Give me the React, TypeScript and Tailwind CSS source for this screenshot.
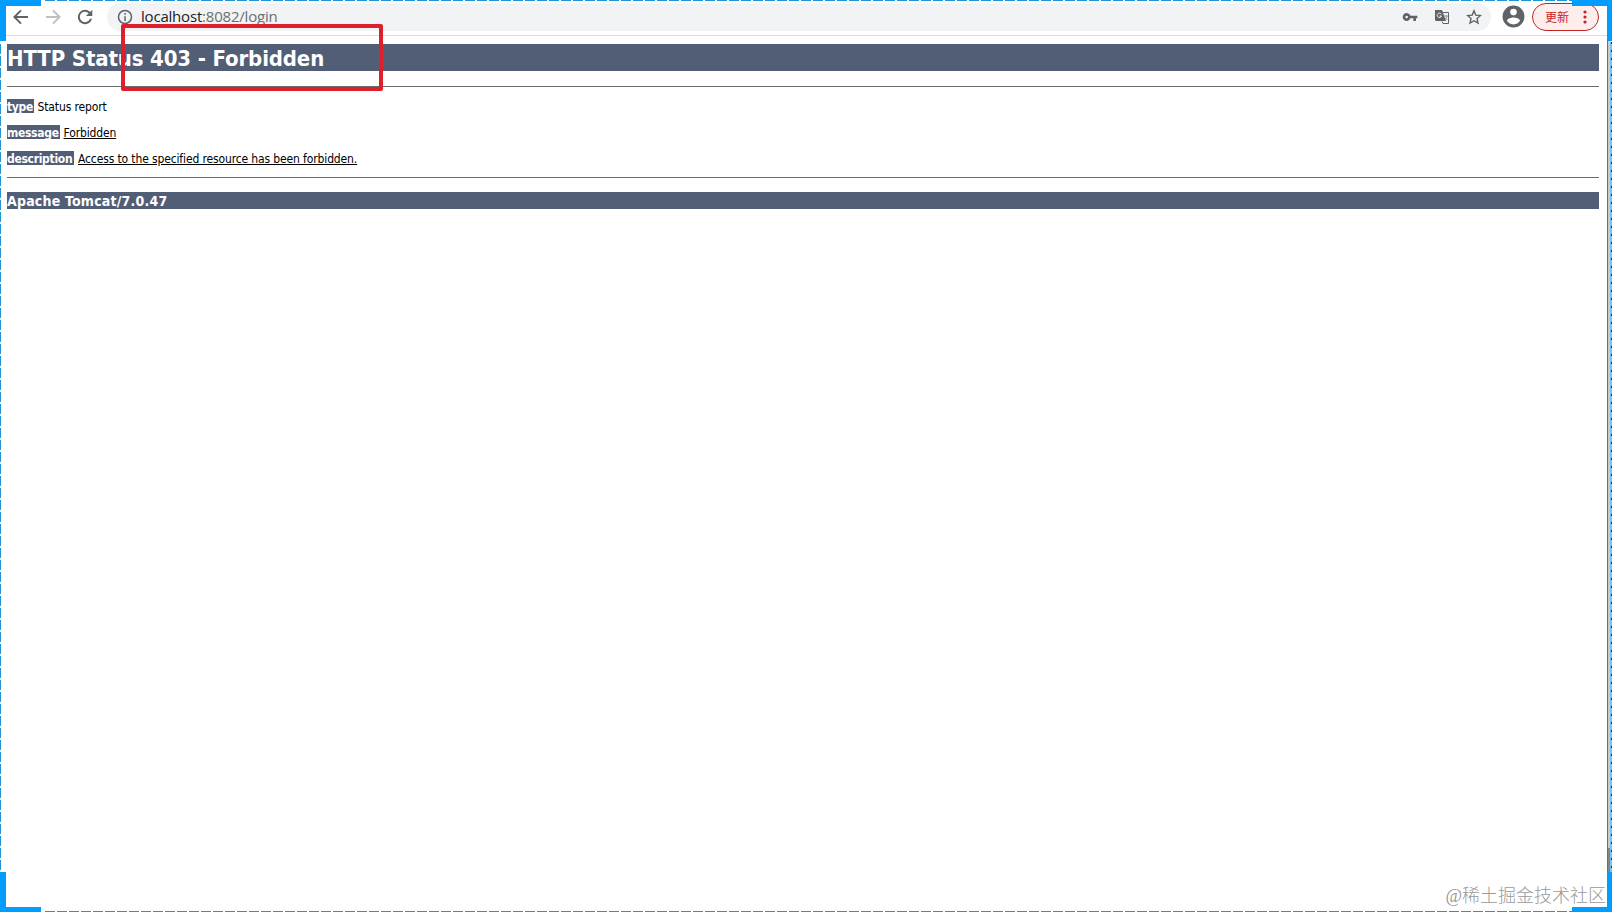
import type { ReactNode } from "react";

const BAND = "bg-[#525d76] text-white font-bold";

function Label({ children, width }: { children: ReactNode; width: string }) {
  return (
    <b className={`inline-block h-[14px] leading-[17px] tracking-[-0.3px] whitespace-nowrap ${BAND} ${width}`}>
      {children}
    </b>
  );
}

function Toolbar() {
  return (
    <header className="flex h-[36px] items-center border-b border-[#dadce0] pb-[2px] pl-[9px] pr-[13px] font-['Open_Sans',sans-serif]">
      <svg className="size-6" viewBox="0 0 24 24" fill="#5f6368">
        <path d="M19 11H7.8l4.9-4.9-1.4-1.4L4 12l7.3 7.3 1.4-1.4L7.8 13H19z" />
      </svg>
      <svg className="ml-2 size-6" viewBox="0 0 24 24" fill="#bdc1c6">
        <path d="M5 13h11.2l-4.9 4.9 1.4 1.4L20 12l-7.3-7.3-1.4 1.4 4.9 4.9H5z" />
      </svg>
      <svg className="ml-2 size-6" viewBox="0 0 24 24" fill="#5f6368">
        <path d="M17.1 6.9A7.2 7.2 0 1 0 19 13.8h-2.1A5.2 5.2 0 1 1 15.7 8.3L13 11h6.3V4.7z" />
      </svg>
      <div className="ml-[10px] flex h-7 flex-1 items-center rounded-full bg-[#f1f3f4] pl-[10px] pr-[9px] text-[15px]">
        <svg className="size-4" viewBox="0 0 16 16" fill="none" stroke="#5f6368" strokeWidth="1.5">
          <circle cx="8" cy="8" r="6.5" />
          <path d="M8 7.2V12M8 4v1.7" />
        </svg>
        <span className="ml-2 tracking-[-0.2px] text-[#202124]">
          localhost<span className="text-[#6b6f73]">:8082/login</span>
        </span>
        <svg className="ml-auto size-4" viewBox="0 0 24 24" fill="#5f6368">
          <path d="M12.65 10A6 6 0 1 0 12.65 14H17v4h4v-4h2v-4H12.65zM7 14a2 2 0 1 1 0-4 2 2 0 0 1 0 4z" />
        </svg>
        <svg className="ml-4 size-4" viewBox="0 0 16 16">
          <path d="M1 1h7l4 11H2.500A1.500 1.500 0 0 1 1 10.500z" fill="#5f6368" />
          <path d="M8.500 3.500H14.500V14.500H9L8 12.500" fill="none" stroke="#5f6368" />
          <path d="M7.300 5.200A2.200 2.200 0 1 0 7.500 7H5.500" fill="none" stroke="#f1f3f4" />
          <path d="M10 7h4M12 6v1M13.200 7q-.7 2.500-2.400 4M11 8.500l2.500 2.500" fill="none" stroke="#80868b" strokeWidth=".8" />
        </svg>
        <svg className="ml-4 size-4" viewBox="0 0 16 16" fill="none" stroke="#5f6368" strokeWidth="1.4">
          <path d="M8 1.800l1.800 4.300 4.700.4-3.500 3.100 1 4.500L8 11.700l-4 2.400 1-4.500-3.500-3.100 4.700-.4z" />
        </svg>
      </div>
      <svg className="ml-[11px] size-[23px]" viewBox="1.500 1.500 21 21" fill="#5f6368">
        <path d="M12 2a10 10 0 1 0 0 20 10 10 0 0 0 0-20zm0 3a3 3 0 1 1 0 6 3 3 0 0 1 0-6zm0 14.200a7.200 7.200 0 0 1-6-3.220c.03-1.990 4-3.080 6-3.080s5.970 1.090 6 3.080a7.200 7.200 0 0 1-6 3.220z" />
      </svg>
      <div className="ml-[7px] flex h-7 w-[67px] items-center rounded-full border border-[#c5221f] bg-[#fdeeed] pl-3 pr-[11px] text-[#c5221f]">
        <span className="font-['Noto_Sans_CJK_SC',sans-serif] text-[12px]">更新</span>
        <svg className="ml-auto h-4 w-1" viewBox="0 0 4 16" fill="#c5221f">
          <circle cx="2" cy="3" r="1.600" />
          <circle cx="2" cy="8" r="1.600" />
          <circle cx="2" cy="13" r="1.600" />
        </svg>
      </div>
    </header>
  );
}

function SelectionFrame() {
  return (
    <svg className="pointer-events-none absolute inset-0" width="1612" height="912" fill="none">
      <path d="M1609.500 0V912" stroke="#c9c9c9" strokeWidth="3" />
      <path d="M1609.500 848V872" stroke="#858585" strokeWidth="3" />
      <path d="M1607.500 0V872" stroke="#6e6e6e" />
      <path d="M1611 42V872" stroke="#6fc3ee" strokeWidth="2" />
      <path d="M1611.500 42V872" stroke="#12344d" strokeDasharray="2 6" />
      <path d="M45 .5H1572M45 911.500H1572M.5 44V872" stroke="#2196d6" strokeDasharray="10 2" />
      <path
        d="M0 0H41V6H6V41H0zM1572 0H1612V41H1607V6H1572zM0 872H6V907H41V912H0zM1607 872H1612V912H1572V907H1607z"
        fill="#009dff"
      />
    </svg>
  );
}

export default function App() {
  return (
    <div className="relative h-[912px] w-[1612px] overflow-hidden bg-white text-black">
      <Toolbar />
      <main className="flex flex-col pl-[7px] pr-[13px] pt-2 font-['DejaVu_Sans_Condensed','DejaVu_Sans',sans-serif] text-[12px]">
        <h1 className={`h-[27px] text-[22px] leading-[29px] tracking-[-0.14px] ${BAND}`}>HTTP Status 403 - Forbidden</h1>
        <hr className="mt-[15px] border-[#6c6c6c]" />
        <p className="mt-3 flex h-[14px] gap-[3.500px] leading-[17px]">
          <Label width="w-[27px]">type</Label>
          <span className="tracking-[-0.13px]">Status report</span>
        </p>
        <p className="mt-3 flex h-[14px] gap-[3.500px] leading-[17px]">
          <Label width="w-[53px]">message</Label>
          <u className="tracking-[-0.13px]">Forbidden</u>
        </p>
        <p className="mt-3 flex h-[14px] gap-1 leading-[17px]">
          <Label width="w-[67px]">description</Label>
          <u className="tracking-[-0.13px]">Access to the specified resource has been forbidden.</u>
        </p>
        <hr className="mt-3 border-[#6c6c6c]" />
        <h3 className={`mt-[14px] h-[17px] text-[14px] leading-[18px] tracking-[0.2px] ${BAND}`}>Apache Tomcat/7.0.47</h3>
      </main>
      <div className="absolute left-[121px] top-[24px] h-[67px] w-[262px] rounded-[2px] border-4 border-[#dd202c]" />
      <div className="absolute bottom-[2px] right-[6px] whitespace-nowrap font-['Liberation_Serif','Noto_Sans_CJK_SC',serif] text-[18px] font-light text-[#999]">
        @稀土掘金技术社区
      </div>
      <SelectionFrame />
    </div>
  );
}
